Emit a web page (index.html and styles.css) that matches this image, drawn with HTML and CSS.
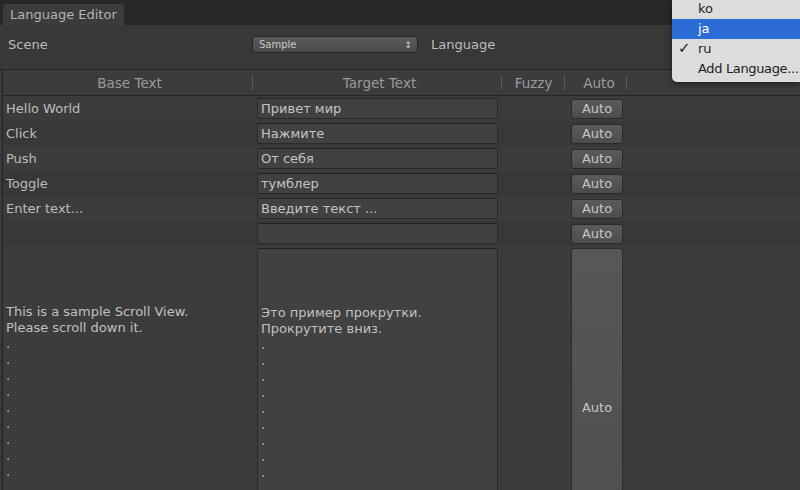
FILE: index.html
```html
<!DOCTYPE html>
<html>
<head>
<meta charset="utf-8">
<link rel="stylesheet" href="styles.css">
</head>
<body>
<div class="window">
  <div class="tabbar"><div class="tab">Language Editor</div></div>
  <div class="toolbar">
    <span class="label scene">Scene</span>
    <div class="popup"><span>Sample</span><span class="arrows">&#8597;</span></div>
    <span class="label lang">Language</span>
  </div>
  <div class="table">
    <div class="row header">
      <div class="c base">Base Text</div>
      <div class="c target">Target Text</div>
      <div class="c fuzzy">Fuzzy</div>
      <div class="c auto">Auto</div>
      <div class="c rest"></div>
    </div>
    <div class="row odd"><div class="c base">Hello World</div><div class="c target"><div class="field">Привет мир</div></div><div class="c fuzzy"></div><div class="c auto"><div class="btn">Auto</div></div><div class="c rest"></div></div>
    <div class="row even"><div class="c base">Click</div><div class="c target"><div class="field">Нажмите</div></div><div class="c fuzzy"></div><div class="c auto"><div class="btn">Auto</div></div><div class="c rest"></div></div>
    <div class="row odd"><div class="c base">Push</div><div class="c target"><div class="field">От себя</div></div><div class="c fuzzy"></div><div class="c auto"><div class="btn">Auto</div></div><div class="c rest"></div></div>
    <div class="row even"><div class="c base">Toggle</div><div class="c target"><div class="field">тумблер</div></div><div class="c fuzzy"></div><div class="c auto"><div class="btn">Auto</div></div><div class="c rest"></div></div>
    <div class="row odd"><div class="c base">Enter text...</div><div class="c target"><div class="field">Введите текст ...</div></div><div class="c fuzzy"></div><div class="c auto"><div class="btn">Auto</div></div><div class="c rest"></div></div>
    <div class="row even"><div class="c base"></div><div class="c target"><div class="field"></div></div><div class="c fuzzy"></div><div class="c auto"><div class="btn">Auto</div></div><div class="c rest"></div></div>
    <div class="row big odd">
      <div class="c base"><div class="multi">This is a sample Scroll View.<br>Please scroll down it.<br>.<br>.<br>.<br>.<br>.<br>.<br>.<br>.<br>.</div></div>
      <div class="c target"><div class="field tall"><div class="multi">Это пример прокрутки.<br>Прокрутите вниз.<br>.<br>.<br>.<br>.<br>.<br>.<br>.<br>.<br>.</div></div></div>
      <div class="c fuzzy"></div>
      <div class="c auto"><div class="btn tall">Auto</div></div>
      <div class="c rest"></div>
    </div>
  </div>
  <div class="menu">
    <div class="item">ko</div>
    <div class="item sel">ja</div>
    <div class="item"><span class="check">&#10003;</span>ru</div>
    <div class="item add">Add Language...</div>
  </div>
</div>
</body>
</html>
```
FILE: styles.css
```css
html, body {
  margin: 0;
  padding: 0;
  width: 800px;
  height: 490px;
  overflow: hidden;
  background: #3a3a3a;
}
.window {
  position: relative;
  width: 800px;
  height: 490px;
  overflow: hidden;
  font-family: "DejaVu Sans", "Liberation Sans", sans-serif;
  font-size: 13px;
  color: #bdbdbd;
}
.tabbar {
  height: 25px;
  background: #282828;
  display: flex;
  align-items: flex-end;
  padding-left: 3px;
  box-sizing: border-box;
}
.tab {
  height: 21px;
  width: 121px;
  box-sizing: border-box;
  background: #3c3c3c;
  border-radius: 3px 3px 0 0;
  padding-left: 7px;
  line-height: 21px;
  font-size: 13px;
  color: #b4b4b4;
}
.toolbar {
  height: 45px;
  background: #383838;
  display: flex;
  align-items: center;
  position: relative;
  padding-bottom: 5px;
  box-sizing: border-box;
  border-bottom: 1px solid #262626;
}
.label {
  font-size: 13px;
  color: #bdbdbd;
}
.scene { margin-left: 8px; width: 244px; }
.popup {
  width: 166px;
  height: 17px;
  box-sizing: border-box;
  border: 1px solid #262626;
  border-radius: 3px;
  background: linear-gradient(#5a5a5a, #4a4a4a);
  display: flex;
  justify-content: space-between;
  align-items: center;
  padding: 0 5px 0 6px;
  font-size: 10px;
  color: #c8c8c8;
}
.arrows { font-size: 9px; color: #cfcfcf; }
.lang { margin-left: 13px; }
.table {
  margin-left: 2px;
  border-left: 1px solid #242424;
}
.row {
  display: flex;
  height: 25px;
}
.header {
  background: #3c3c3c;
  border-bottom: 1px solid #262626;
  height: 26px;
  box-sizing: border-box;
  color: #9a9a9a;
  font-size: 13.5px;
}
.header .c {
  justify-content: center;
  position: relative;
}
.header .c::after {
  content: "";
  position: absolute;
  right: 0;
  top: 5px;
  height: 15px;
  width: 1px;
  background: #5a5a5a;
}
.header .rest::after { display: none; }
.c {
  display: flex;
  align-items: center;
  box-sizing: border-box;
  flex: none;
}
.base { width: 250px; padding-left: 3px; }
.target { width: 249px; padding-left: 4px; }
.fuzzy { width: 63px; }
.auto { width: 62px; padding-left: 6px; }
.rest { flex: 1; }
.odd { background: #3c3c3c; }
.even { background: #383838; }
.field {
  width: 241px;
  height: 21px;
  box-sizing: border-box;
  background: #414141;
  border: 1px solid #2a2a2a;
  border-top-color: #222;
  border-radius: 2px;
  padding-left: 3px;
  line-height: 19px;
  color: #c4c4c4;
  font-size: 13px;
}
.btn {
  width: 52px;
  height: 20px;
  box-sizing: border-box;
  border: 1px solid #2a2a2a;
  border-radius: 3px;
  background: linear-gradient(#5b5b5b, #4c4c4c);
  text-align: center;
  line-height: 18px;
  color: #c6c6c6;
  font-size: 13px;
}
.big {
  height: 400px;
  align-items: flex-start;
}
.big .c { align-items: flex-start; }
.big .base .multi { padding-top: 58px; }
.multi {
  line-height: 16px;
  color: #c0c0c0;
  font-size: 13px;
}
.field.tall {
  height: 400px;
  margin-top: 2px;
  padding-top: 56px;
}
.btn.tall {
  height: 320px;
  margin-top: 2px;
  line-height: 318px;
  background: linear-gradient(#575757, #4d4d4d);
  border-color: #2c2c2c;
}
.menu {
  position: absolute;
  top: 0;
  right: 0;
  width: 128px;
  height: 82px;
  background: #dcdcdc;
  border-radius: 0 0 0 5px;
  box-shadow: 0 2px 6px rgba(0,0,0,0.5);
  box-sizing: border-box;
  font-size: 13px;
  color: #1e1e1e;
  font-family: "DejaVu Sans", "Liberation Sans", sans-serif;
}
.item {
  height: 20px;
  line-height: 19px;
  padding-left: 26px;
  position: relative;
  white-space: nowrap;
}
.item:first-child { height: 19px; line-height: 17px; }
.item.add { letter-spacing: -0.35px; }
.item.sel {
  background: #2a6bd6;
  color: #ffffff;
}
.check {
  position: absolute;
  left: 6px;
  top: 0;
  font-size: 15px;
  font-weight: bold;
}
```
